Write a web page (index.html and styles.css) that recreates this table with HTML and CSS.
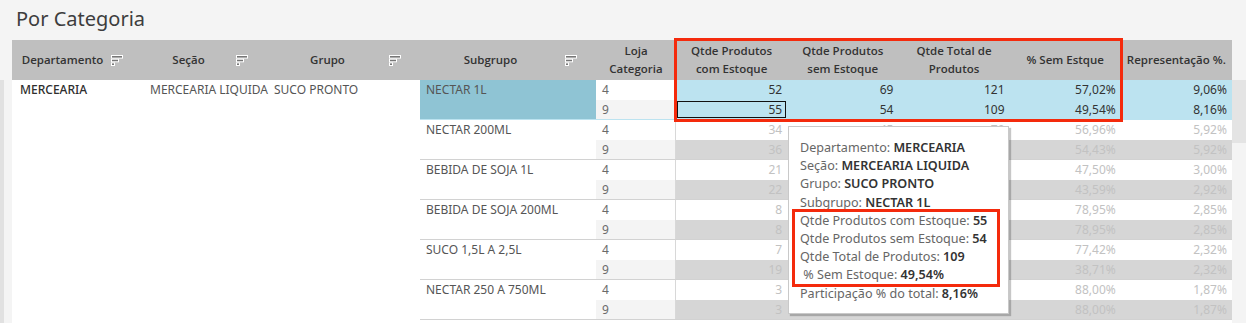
FILE: index.html
```html
<!DOCTYPE html>
<html lang="pt">
<head>
<meta charset="utf-8">
<title>Por Categoria</title>
<link rel="stylesheet" href="styles.css">
</head>
<body>
<div class="title">Por Categoria</div>
<div class="view">
  <div class="edge"><div class="strip"></div></div>
  <div class="table">
    <div class="head">
      <div class="hc c-dep"><span class="lbl">Departamento</span><svg class="sort" width="12" height="11" viewBox="0 0 12 11"><rect x="0.5" y="0.5" width="11" height="2.6" fill="#777" stroke="#fff"/><rect x="0.5" y="4.2" width="7" height="2.6" fill="#777" stroke="#fff"/><rect x="0.5" y="7.9" width="3" height="2.6" fill="#777" stroke="#fff"/></svg></div>
      <div class="hc c-sec"><span class="lbl">Seção</span><svg class="sort" width="12" height="11" viewBox="0 0 12 11"><rect x="0.5" y="0.5" width="11" height="2.6" fill="#777" stroke="#fff"/><rect x="0.5" y="4.2" width="7" height="2.6" fill="#777" stroke="#fff"/><rect x="0.5" y="7.9" width="3" height="2.6" fill="#777" stroke="#fff"/></svg></div>
      <div class="hc c-grp"><span class="lbl">Grupo</span><svg class="sort sort-n" width="12" height="11" viewBox="0 0 12 11"><rect x="0.5" y="0.5" width="11" height="2.6" fill="#777" stroke="#fff"/><rect x="0.5" y="4.2" width="7" height="2.6" fill="#777" stroke="#fff"/><rect x="0.5" y="7.9" width="3" height="2.6" fill="#777" stroke="#fff"/></svg></div>
      <div class="hc c-sub"><span class="lbl">Subgrupo</span><svg class="sort sort-n" width="12" height="11" viewBox="0 0 12 11"><rect x="0.5" y="0.5" width="11" height="2.6" fill="#777" stroke="#fff"/><rect x="0.5" y="4.2" width="7" height="2.6" fill="#777" stroke="#fff"/><rect x="0.5" y="7.9" width="3" height="2.6" fill="#777" stroke="#fff"/></svg></div>
      <div class="hc c-loja"><span class="lbl">Loja<br>Categoria</span></div>
      <div class="hc c-m"><span class="lbl">Qtde Produtos<br>com Estoque</span></div>
      <div class="hc c-m"><span class="lbl">Qtde Produtos<br>sem Estoque</span></div>
      <div class="hc c-m"><span class="lbl">Qtde Total de<br>Produtos</span></div>
      <div class="hc c-m"><span class="lbl">% Sem Estque</span></div>
      <div class="hc c-m c-rep"><span class="lbl">Representação %.</span></div>
    </div>

    <div class="body">
      <div class="dims">
        <div class="dc c-dep strong">MERCEARIA</div>
        <div class="dc c-sec">MERCEARIA LIQUIDA</div>
        <div class="dc c-grp">SUCO PRONTO</div>
      </div>
      <div class="groups">
        <div class="group sel">
          <div class="sub">NECTAR 1L</div>
          <div class="rows">
            <div class="row"><div class="loja">4</div><div class="m">52</div><div class="m">69</div><div class="m">121</div><div class="m">57,02%</div><div class="m">9,06%</div></div>
            <div class="row alt"><div class="loja">9</div><div class="m focus">55</div><div class="m">54</div><div class="m">109</div><div class="m">49,54%</div><div class="m">8,16%</div></div>
          </div>
        </div>
        <div class="group">
          <div class="sub">NECTAR 200ML</div>
          <div class="rows">
            <div class="row"><div class="loja">4</div><div class="m">34</div><div class="m">45</div><div class="m">79</div><div class="m">56,96%</div><div class="m">5,92%</div></div>
            <div class="row alt"><div class="loja">9</div><div class="m">36</div><div class="m">43</div><div class="m">79</div><div class="m">54,43%</div><div class="m">5,92%</div></div>
          </div>
        </div>
        <div class="group">
          <div class="sub">BEBIDA DE SOJA 1L</div>
          <div class="rows">
            <div class="row"><div class="loja">4</div><div class="m">21</div><div class="m">19</div><div class="m">40</div><div class="m">47,50%</div><div class="m">3,00%</div></div>
            <div class="row alt"><div class="loja">9</div><div class="m">22</div><div class="m">17</div><div class="m">39</div><div class="m">43,59%</div><div class="m">2,92%</div></div>
          </div>
        </div>
        <div class="group">
          <div class="sub">BEBIDA DE SOJA 200ML</div>
          <div class="rows">
            <div class="row"><div class="loja">4</div><div class="m">8</div><div class="m">30</div><div class="m">38</div><div class="m">78,95%</div><div class="m">2,85%</div></div>
            <div class="row alt"><div class="loja">9</div><div class="m">8</div><div class="m">30</div><div class="m">38</div><div class="m">78,95%</div><div class="m">2,85%</div></div>
          </div>
        </div>
        <div class="group">
          <div class="sub">SUCO 1,5L A 2,5L</div>
          <div class="rows">
            <div class="row"><div class="loja">4</div><div class="m">7</div><div class="m">24</div><div class="m">31</div><div class="m">77,42%</div><div class="m">2,32%</div></div>
            <div class="row alt"><div class="loja">9</div><div class="m">19</div><div class="m">12</div><div class="m">31</div><div class="m">38,71%</div><div class="m">2,32%</div></div>
          </div>
        </div>
        <div class="group">
          <div class="sub">NECTAR 250 A 750ML</div>
          <div class="rows">
            <div class="row"><div class="loja">4</div><div class="m">3</div><div class="m">22</div><div class="m">25</div><div class="m">88,00%</div><div class="m">1,87%</div></div>
            <div class="row alt"><div class="loja">9</div><div class="m">3</div><div class="m">22</div><div class="m">25</div><div class="m">88,00%</div><div class="m">1,87%</div></div>
          </div>
        </div>
      </div>
    </div>

    <div class="redbox"></div>

    <div class="tooltip">
      <div class="tl">Departamento: <b>MERCEARIA</b></div>
      <div class="tl">Seção: <b>MERCEARIA LIQUIDA</b></div>
      <div class="tl">Grupo: <b>SUCO PRONTO</b></div>
      <div class="tl">Subgrupo: <b>NECTAR 1L</b></div>
      <div class="hl">
        <div class="tl">Qtde Produtos com Estoque: <b>55</b></div>
        <div class="tl">Qtde Produtos sem Estoque: <b>54</b></div>
        <div class="tl">Qtde Total de Produtos: <b>109</b></div>
        <div class="tl">&nbsp;% Sem Estoque: <b>49,54%</b></div>
      </div>
      <div class="tl">Participação % do total: <b>8,16%</b></div>
    </div>
  </div>
  <div class="scroll"><div class="thumb"></div></div>
</div>
</body>
</html>
```

FILE: styles.css
```css
* { box-sizing: border-box; }

html, body {
  margin: 0;
  padding: 0;
  height: 323px;
  overflow: hidden;
  background: #f4f4f4;
  font-family: "Noto Sans", "Open Sans", sans-serif;
}

.title {
  height: 40px;
  padding: 6px 0 0 16px;
  font-size: 20px;
  color: #3d3d3d;
  line-height: 26px;
}

.view {
  display: flex;
  height: 283px;
}

.edge {
  width: 12px;
  flex: none;
  padding-top: 40px;
}
.edge .strip {
  height: 100%;
  width: 4px;
  background: #e1e1e1;
}

.table {
  position: relative;
  width: 1220px;
  flex: none;
  display: flex;
  flex-direction: column;
}

.head {
  display: flex;
  height: 40px;
  background: #bfbfbf;
  color: #333;
  font-family: "Open Sans", "Noto Sans", sans-serif;
  font-weight: 600;
  font-size: 11.5px;
  line-height: 18px;
}

.hc {
  display: flex;
  align-items: center;
  text-align: center;
}
.hc .lbl { flex: 1; white-space: nowrap; }
.sort { flex: none; margin: 0 22px 0 4px; }
.sort-n { margin-right: 19px; }

.c-dep { width: 133px; }
.c-sec { width: 125px; }
.c-grp { width: 150px; }
.c-sub { width: 176px; }
.c-loja { width: 80px; }
.c-m { width: 111.2px; }
.head .c-dep .lbl { padding-left: 6px; }

.body {
  flex: 1;
  display: flex;
  background: #fff;
  overflow: hidden;
  font-size: 12px;
  color: #555;
}

.dims {
  display: flex;
  width: 408px;
  flex: none;
}
.dc {
  height: 20px;
  line-height: 20px;
  white-space: nowrap;
}
.dims .c-dep { padding-left: 8px; }
.dims .c-sec { padding-left: 5px; }
.dims .c-grp { padding-left: 4px; }
.strong { color: #2e2e2e; font-weight: 500; }

.groups {
  width: 812px;
  flex: none;
}

.group {
  display: flex;
  height: 40px;
  border-bottom: 1px solid #d2d2d2;
}

.sub {
  width: 176px;
  flex: none;
  padding-left: 6px;
  line-height: 20px;
  white-space: nowrap;
}
.group.sel .sub { background: #8fc4d4; }

.rows {
  flex: 1;
  display: flex;
  flex-direction: column;
}

.row {
  display: flex;
  height: 20px;
  line-height: 20px;
}
.row.alt { height: 19px; }

.loja {
  width: 80px;
  flex: none;
  padding-left: 6px;
  color: #6a6a6a;
  border-right: 1px solid #d8d8d8;
}
.row.alt .loja { background: #f4f4f4; }

.m {
  width: 111.2px;
  flex: none;
  text-align: right;
  padding-right: 5px;
  color: #c2c2c2;
}
.row.alt .m { background: #d6d6d6; }

.group.sel .m { background: #bce3f0; color: #333; }
.group.sel .loja { border-right-color: transparent; }
.group.sel { border-bottom-color: #bce3f0; }

.m.focus {
  outline: 1px solid #111;
  outline-offset: -2px;
}

.redbox {
  position: absolute;
  left: 662px;
  top: -2px;
  width: 449px;
  height: 84px;
  border: 3px solid #f42a0c;
  pointer-events: none;
}

.tooltip {
  position: absolute;
  left: 776px;
  top: 86px;
  width: 221px;
  height: 188px;
  background: #fff;
  border: 1px solid #c9c9c9;
  box-shadow: 2px 2px 1px rgba(0, 0, 0, 0.22);
  padding: 12px 0 0 11px;
  font-size: 12.6px;
  line-height: 18.2px;
  color: #666;
  white-space: nowrap;
}
.tooltip b { color: #333; font-weight: 600; }

.hl { position: relative; }
.hl::before {
  content: "";
  position: absolute;
  left: -8px;
  right: 8px;
  top: -3px;
  bottom: -2px;
  border: 3px solid #f42a0c;
}

.scroll {
  flex: 1;
  padding-top: 40px;
  background: #f4f4f4;
}
.thumb {
  height: 63px;
  background: #e4e4e4;
}
```
